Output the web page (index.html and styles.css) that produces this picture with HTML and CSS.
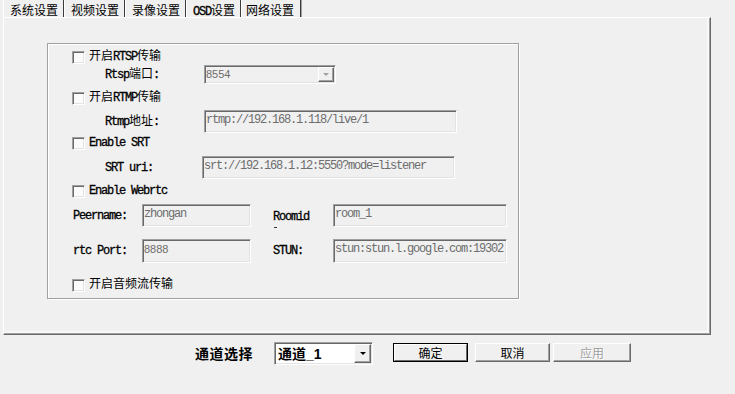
FILE: index.html
```html
<!DOCTYPE html>
<html lang="zh-CN">
<head>
<meta charset="utf-8">
<title>网络设置</title>
<link rel="stylesheet" href="styles.css">
</head>
<body>
<div class="tabs">
  <div class="tab">系统设置</div>
  <div class="tab">视频设置</div>
  <div class="tab">录像设置</div>
  <div class="tab"><span class="m">OSD</span>设置</div>
  <div class="tab active">网络设置</div>
</div>
<div class="panel">
  <div class="group">
    <div class="row ck r-rtsp"><span class="cb"></span><span class="lbl">开启<span class="m">RTSP</span>传输</span></div>
    <div class="row r-port">
      <span class="flabel w99"><span class="m">Rtsp</span>端口<span class="m">:</span></span>
      <div class="combo dis"><span class="cval">8554</span><span class="dd"><span class="arrow gray"></span></span></div>
    </div>
    <div class="row ck r-rtmp"><span class="cb"></span><span class="lbl">开启<span class="m">RTMP</span>传输</span></div>
    <div class="row r-rtmpaddr">
      <span class="flabel w99"><span class="m">Rtmp</span>地址<span class="m">:</span></span>
      <div class="tb w253"><span class="m">rtmp://192.168.1.118/live/1</span></div>
    </div>
    <div class="row ck r-srt"><span class="cb"></span><span class="lbl m">Enable SRT</span></div>
    <div class="row r-srturi">
      <span class="flabel w97 m">SRT uri:</span>
      <div class="tb w253"><span class="m">srt://192.168.1.12:5550?mode=listener</span></div>
    </div>
    <div class="row ck r-web"><span class="cb"></span><span class="lbl m">Enable Webrtc</span></div>
    <div class="row r-peer">
      <span class="flabel small m">Peername:</span>
      <div class="tb w109"><span class="m">zhongan</span></div>
      <span class="flabel right room m">Roomid</span>
      <div class="tb w174"><span class="m">room_1</span></div>
    </div>
    <div class="row r-port2">
      <span class="flabel small m">rtc Port:</span>
      <div class="tb w109"><span class="sans">8888</span></div>
      <span class="flabel right m">STUN:</span>
      <div class="tb w174"><span class="m">stun:stun.l.google.com:19302</span></div>
    </div>
    <div class="row ck r-audio"><span class="cb"></span><span class="lbl">开启音频流传输</span></div>
  </div>
</div>
<div class="bottom">
  <span class="chl">通道选择</span>
  <div class="combo sel"><span class="sval">通道<span class="bl">_1</span></span><span class="dd big"><span class="arrow"></span></span></div>
  <div class="btn def"><span>确定</span></div>
  <div class="btn b2">取消</div>
  <div class="btn b3 disabled">应用</div>
</div>
</body>
</html>
```
FILE: styles.css
```css
* { box-sizing: border-box; }
html, body { margin: 0; padding: 0; }
body {
  background: #f0f0f0;
  width: 735px;
  height: 394px;
  overflow: hidden;
  font-family: "Liberation Mono", "Noto Sans CJK SC", monospace;
  font-size: 12px;
  color: #000;
}
.m { font-family: "Liberation Mono", "Noto Sans CJK SC", monospace; letter-spacing: -1.2px; }
.sans { font-family: "Liberation Sans", Arial, sans-serif; font-size: 11px; }
.lbl .m, .lbl.m, .flabel .m, .flabel.m, .tab .m { -webkit-text-stroke: 0.3px #000; }

/* tabs */
.tabs { display: flex; height: 17px; margin-left: 3px; }
.tab {
  height: 17px;
  line-height: 19px;
  padding: 0 5px 0 6px;
  border-left: 1px solid #fff;
  border-right: 1px solid #3c3c3c;
  box-shadow: 1px 0 0 #a0a0a0;
  font-family: "Noto Sans CJK SC", sans-serif;
  font-size: 12px;
  white-space: nowrap;
}
.tab.active { padding: 0 6px 0 4px; }

/* panel */
.panel {
  margin-left: 3px;
  width: 708px;
  height: 318px;
  border: 1px solid;
  border-color: #fff #696969 #696969 #fff;
  box-shadow: inset -1px -1px 0 #a0a0a0, inset -3px -3px 0 #f8f8f8;
  padding: 25px 0 0 43px;
}
.group {
  width: 472px;
  height: 256px;
  border: 1px solid #a0a0a0;
  box-shadow: 1px 1px 0 #fff, inset 1px 1px 0 #fff;
}

.row { display: flex; align-items: center; }
.ck { height: 13px; padding-left: 24px; line-height: 13px; }
.cb {
  flex: none;
  width: 13px;
  height: 13px;
  border: 1px solid;
  border-color: #a0a0a0 #fff #fff #a0a0a0;
  box-shadow: inset 1px 1px 0 #696969, inset -1px -1px 0 #e3e3e3;
  background: #fbfbfb;
  margin-right: 4px;
}
.lbl { white-space: nowrap; }

.r-rtsp { margin-top: 6px; height: 14px; }
.r-port { margin-top: 1px; height: 19px; padding-left: 57px; }
.r-rtmp { margin-top: 8px; }
.r-rtmpaddr { margin-top: 5px; height: 23px; padding-left: 57px; }
.r-srt { margin-top: 4px; }
.r-srturi { margin-top: 6px; height: 23px; padding-left: 57px; }
.r-web { margin-top: 6px; }
.r-peer { margin-top: 6px; height: 23px; padding-left: 25px; align-items: flex-start; }
.r-port2 { margin-top: 12px; height: 24px; padding-left: 25px; }
.r-audio { margin-top: 16px; }

.flabel { flex: none; white-space: nowrap; line-height: 14px; }
.w99 { width: 99px; }
.w97 { width: 97px; }
.small { width: 69px; }
.r-peer .small { margin-top: 5px; }
.right { width: 60px; margin-left: 22px; }
.room { padding-top: 6px; }
.room::after {
  content: "";
  display: block;
  width: 3px;
  height: 1px;
  margin: 3px 0 0 1px;
  background: #333;
}

.tb {
  flex: none;
  height: 23px;
  border: 1px solid;
  border-color: #a0a0a0 #fff #fff #a0a0a0;
  box-shadow: inset 1px 1px 0 #696969, inset -1px -1px 0 #e3e3e3;
  padding: 2px 1px 0 1px;
  color: #6d6d6d;
  line-height: 14px;
  white-space: nowrap;
  overflow: hidden;
  background: #f0f0f0;
}
.r-port2 .tb { height: 24px; }
.w253 { width: 253px; }
.w109 { width: 109px; }
.w174 { width: 174px; }

/* combo */
.combo {
  flex: none;
  display: flex;
  justify-content: space-between;
  border: 1px solid;
  border-color: #a0a0a0 #fff #fff #a0a0a0;
  box-shadow: inset 1px 1px 0 #696969, inset -1px -1px 0 #e3e3e3;
}
.combo.dis { width: 132px; height: 19px; background: #f0f0f0; }
.cval {
  font-family: "Liberation Sans", Arial, sans-serif;
  font-size: 11px;
  color: #6d6d6d;
  line-height: 15px;
  padding: 1px 0 0 1px;
}
.dd {
  flex: none;
  width: 16px;
  height: 15px;
  margin: 1px 1px 1px 0;
  border: 1px solid;
  border-color: #fff #696969 #696969 #fff;
  box-shadow: inset -1px -1px 0 #a0a0a0;
  background: #f0f0f0;
  display: flex;
  align-items: center;
  justify-content: center;
}
.arrow {
  width: 0;
  height: 0;
  border-left: 3px solid transparent;
  border-right: 3px solid transparent;
  border-top: 3px solid #000;
}
.arrow.gray { border-top-color: #a0a0a0; }

/* bottom */
.bottom {
  display: flex;
  align-items: flex-start;
  margin-top: 7px;
  padding-left: 195px;
  height: 23px;
}
.chl {
  font-family: "Noto Sans CJK SC", sans-serif;
  font-weight: bold;
  font-size: 14px;
  letter-spacing: 0.5px;
  line-height: 23px;
}
.combo.sel {
  margin-left: 21px;
  width: 99px;
  height: 23px;
  background: #fff;
}
.sval {
  font-family: "Noto Sans CJK SC", sans-serif;
  font-weight: bold;
  font-size: 14px;
  line-height: 19px;
  padding: 1px 0 0 3px;
}
.bl { font-family: "Liberation Sans", Arial, sans-serif; }
.dd.big { width: 17px; height: 19px; margin: 1px; }

.btn {
  flex: none;
  width: 75px;
  height: 19px;
  margin-top: 1px;
  border: 1px solid;
  border-color: #fff #696969 #696969 #fff;
  box-shadow: inset -1px -1px 0 #a0a0a0;
  font-family: "Noto Sans CJK SC", sans-serif;
  font-size: 12px;
  line-height: 17px;
  text-align: center;
}
.btn.def {
  margin-left: 20px;
  border: 1px solid #000;
  box-shadow: none;
  padding: 0;
}
.btn.def span {
  display: block;
  height: 17px;
  border: 1px solid;
  border-color: #fff #696969 #696969 #fff;
  line-height: 15px;
}
.b2 { margin-left: 7px; }
.b3 { margin-left: 3px; width: 78px; }
.disabled { color: #a0a0a0; text-shadow: 1px 1px 0 #fff; }
```
